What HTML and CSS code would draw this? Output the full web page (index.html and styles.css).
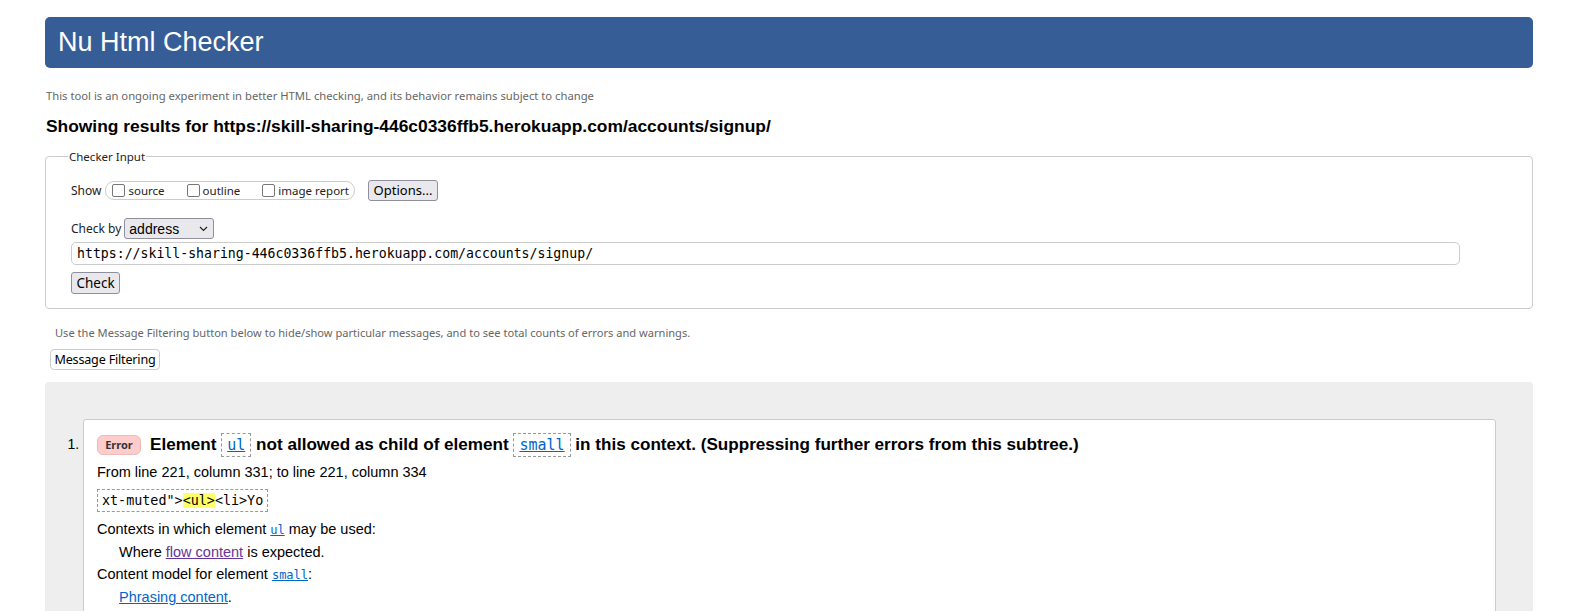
FILE: index.html
```html
<!DOCTYPE html>
<html lang="en">
<head>
<meta charset="utf-8">
<title>Nu Html Checker</title>
<link rel="stylesheet" href="styles.css">
</head>
<body>
<header class="banner"><h1 class="banner-title">Nu Html Checker</h1></header>
<p class="lede">This tool is an ongoing experiment in better HTML checking, and its behavior remains subject to change</p>
<h2 class="results-for">Showing results for https://skill-sharing-446c0336ffb5.herokuapp.com/accounts/signup/</h2>
<fieldset class="checker">
  <legend class="checker-legend">Checker Input</legend>
  <div class="row show-row">
    <span class="lbl">Show</span>
    <span class="show-group">
      <label class="opt"><span class="cb"></span>source</label>
      <label class="opt"><span class="cb"></span>outline</label>
      <label class="opt"><span class="cb"></span>image report</label>
    </span>
    <span class="btn btn-options">Options...</span>
  </div>
  <div class="row by-row">
    <span class="lbl">Check by</span>
    <span class="select">address<svg class="chev" width="9" height="6" viewBox="0 0 9 6"><path d="M1 1 L4.5 4.5 L8 1" fill="none" stroke="#222" stroke-width="1.2"/></svg></span>
  </div>
  <div class="url">https://skill-sharing-446c0336ffb5.herokuapp.com/accounts/signup/</div>
  <div class="row"><span class="btn btn-check">Check</span></div>
</fieldset>
<p class="hint">Use the Message Filtering button below to hide/show particular messages, and to see total counts of errors and warnings.</p>
<div class="filter-wrap"><span class="btn btn-filter">Message Filtering</span></div>
<div class="results">
  <ol class="msgs">
    <li class="msg">
      <p class="msg-head"><span class="badge">Error</span><span class="msg-text">Element <code class="ref"><a href="#">ul</a></code> not allowed as child of element <code class="ref"><a href="#">small</a></code> in this context. (Suppressing further errors from this subtree.)</span></p>
      <p class="loc">From line 221, column 331; to line 221, column 334</p>
      <p class="extract"><code>xt-muted"&gt;<b class="hl">&lt;ul&gt;</b>&lt;li&gt;Yo</code></p>
      <p class="det">Contexts in which element <a class="mono" href="#">ul</a> may be used:</p>
      <p class="det ind">Where <a class="visited" href="#">flow content</a> is expected.</p>
      <p class="det">Content model for element <a class="mono" href="#">small</a>:</p>
      <p class="det ind"><a href="#">Phrasing content</a>.</p>
    </li>
  </ol>
</div>
</body>
</html>
```
FILE: styles.css
```css
* { box-sizing: border-box; }
html, body { margin: 0; background: #fff; }
body {
  padding: 17px 37px 0 45px;
  font-family: "Liberation Sans", Arial, sans-serif;
  color: #000;
  overflow: hidden;
  height: 611px;
}
.banner {
  background: #365d96;
  border-radius: 5px;
  height: 51px;
  display: flex;
  align-items: center;
  padding-left: 13px;
}
.banner-title {
  margin: 0;
  color: #fff;
  font-weight: normal;
  font-size: 27px;
  line-height: 1;
}
.lede {
  margin: 20px 0 0 1px;
  font-family: "Noto Sans", sans-serif;
  font-size: 11.25px;
  color: #666;
  line-height: 16px;
}
.results-for {
  margin: 12px 0 0 1px;
  font-size: 17.4px;
  font-weight: bold;
  line-height: 20px;
}
.checker {
  margin: 13px 0 0;
  border: 1px solid #ccc;
  border-radius: 4px;
  padding: 0 25px 12px;
  height: 160px;
  font-family: "Noto Sans", sans-serif;
  font-size: 12px;
}
.checker-legend {
  padding: 0 1px;
  margin-left: -3px;
  font-size: 11.5px;
  color: #222;
}
.row { display: flex; align-items: center; }
.show-row { margin-top: 15px; height: 22px; }
.lbl { font-size: 12px; color: #222; }
.show-group {
  display: inline-flex;
  align-items: center;
  height: 19px;
  border: 1px solid #ccc;
  border-radius: 9px;
  padding: 0 5px 0 6px;
  margin-left: 4px;
  gap: 22px;
}
.opt {
  display: inline-flex;
  align-items: center;
  font-size: 11.5px;
  color: #222;
}
.cb {
  width: 13px;
  height: 13px;
  border: 1.5px solid #777;
  border-radius: 2px;
  margin-right: 3px;
  background: #fff;
}
.btn {
  display: inline-flex;
  align-items: center;
  justify-content: center;
  white-space: nowrap;
  background: #e9e9ed;
  border: 1px solid #8f8f9d;
  border-radius: 3px;
  font-family: "Noto Sans", sans-serif;
  font-size: 13px;
  color: #000;
}
.btn-options { margin-left: 13px; width: 70px; height: 21px; }
.by-row { margin-top: 17px; }
.select {
  margin-left: 3px;
  display: inline-flex;
  align-items: center;
  justify-content: space-between;
  width: 90px;
  height: 21px;
  padding: 0 5px 0 4px;
  background: #e9e9ed;
  border: 1px solid #8f8f9d;
  border-radius: 3px;
  font-family: "Liberation Sans", Arial, sans-serif;
  font-size: 14px;
  color: #000;
}
.url {
  margin-top: 3px;
  height: 23px;
  border: 1px solid #ccc;
  border-radius: 5px;
  padding: 0 5px;
  display: flex;
  align-items: center;
  font-family: "DejaVu Sans Mono", monospace;
  font-size: 13.2px;
  color: #000;
  margin-right: 47px;
}
.btn-check { margin-top: 7px; width: 49px; height: 22px; font-size: 13.5px; }
.hint {
  margin: 16px 0 0 10px;
  font-family: "Noto Sans", sans-serif;
  font-size: 11.1px;
  color: #666;
  line-height: 16px;
}
.filter-wrap { margin: 8px 0 0 5px; height: 21px; display: flex; }
.btn-filter {
  height: 21px;
  width: 110px;
  padding: 0;
  background: #fff;
  border: 1px solid #ccc;
  border-radius: 4px;
  font-size: 12.6px;
  letter-spacing: -0.2px;
}
.results {
  margin-top: 12px;
  background: #eee;
  border-radius: 4px 4px 0 0;
  padding: 37px 37px 20px 38px;
  height: 300px;
}
.msgs { margin: 0; padding: 0; list-style: decimal; }
.msg {
  background: #fff;
  border: 1px solid #ccc;
  border-radius: 3px;
  padding: 12px 13px 20px;
  font-size: 14.5px;
  line-height: 22px;
}
.msg::marker { font-size: 14px; }
.msg p { margin: 0; }
.msg-head { display: flex; align-items: center; }
.badge {
  display: inline-flex;
  align-items: center;
  justify-content: center;
  width: 44px;
  height: 20px;
  background: #fcc;
  border: 1px solid #ebb;
  border-radius: 6px;
  font-family: "Noto Sans", sans-serif;
  font-size: 11px;
  font-weight: bold;
  color: #333;
  margin-right: 9px;
  flex: none;
}
.msg-text { font-size: 17.1px; font-weight: bold; line-height: 26px; }
.ref {
  display: inline-block;
  border: 1px dashed #999;
  padding: 0 5px;
  line-height: 22px;
  font-weight: normal;
  font-family: "DejaVu Sans Mono", monospace;
  font-size: 15px;
}
a { color: #0066cc; }
.mono { font-family: "DejaVu Sans Mono", monospace; font-size: 12px; }
.visited { color: #663399; }
.loc { margin-top: 3px !important; }
.extract { margin-top: 6px !important; }
.extract code {
  display: inline-block;
  border: 1px dashed #999;
  padding: 0 4px;
  font-family: "DejaVu Sans Mono", monospace;
  font-size: 13.4px;
  line-height: 21px;
}
.hl { background: #ff6; font-weight: normal; }
.extract + .det { margin-top: 6px !important; }
.det { margin-top: 0 !important; }
.ind { padding-left: 22px; }
```
